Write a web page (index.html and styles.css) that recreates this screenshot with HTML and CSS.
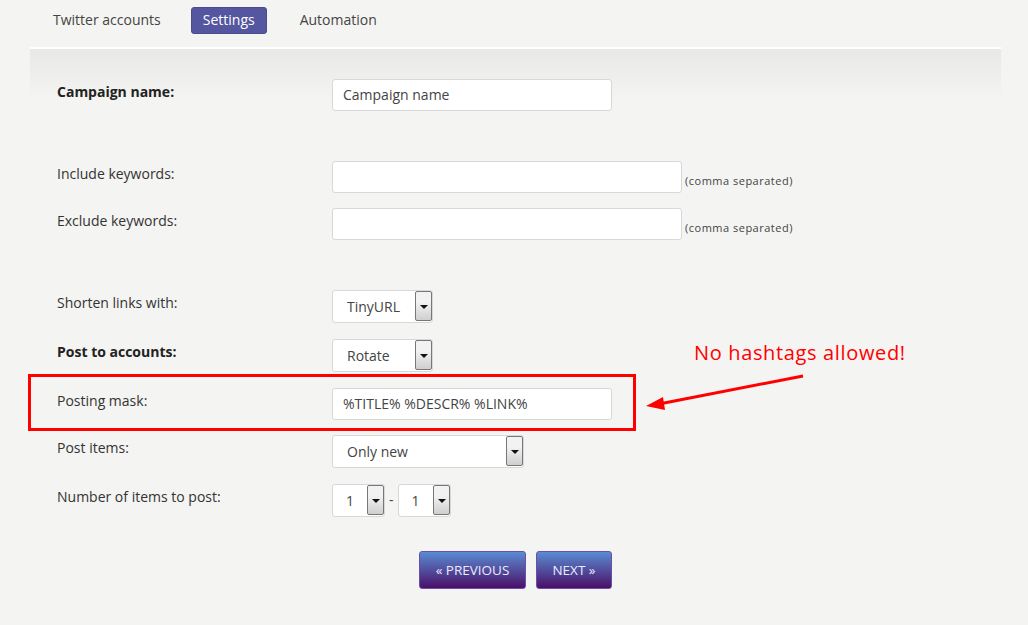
FILE: index.html
```html
<!DOCTYPE html>
<html lang="en">
  <head>
    <meta charset="UTF-8" />
    <title>Campaign settings</title>
    <link rel="stylesheet" href="styles.css">
  </head>
  <body>
    <div class="tabs">
      <div class="tab">Twitter accounts</div>
      <div class="tab active">Settings</div>
      <div class="tab">Automation</div>
    </div>

    <div class="panel">
      <div class="row first">
        <div class="label bold">Campaign name:</div>
        <div class="input w280">Campaign name</div>
      </div>

      <div class="row gap-big">
        <div class="label">Include keywords:</div>
        <div class="input w350"></div>
        <div class="hint">(comma separated)</div>
      </div>
      <div class="row tight">
        <div class="label">Exclude keywords:</div>
        <div class="input w350"></div>
        <div class="hint">(comma separated)</div>
      </div>

      <div class="row gap-big">
        <div class="label">Shorten links with:</div>
        <div class="select w101"><span class="val">TinyURL</span><span class="arrow"></span></div>
      </div>
      <div class="row">
        <div class="label bold">Post to accounts:</div>
        <div class="select w101"><span class="val">Rotate</span><span class="arrow"></span></div>
      </div>
      <div class="row">
        <div class="label">Posting mask:</div>
        <div class="input w280">%TITLE% %DESCR% %LINK%</div>
      </div>
      <div class="row tight">
        <div class="label">Post items:</div>
        <div class="select w192"><span class="val">Only new</span><span class="arrow"></span></div>
      </div>
      <div class="row">
        <div class="label">Number of items to post:</div>
        <div class="select w54"><span class="val">1</span><span class="arrow"></span></div>
        <div class="dash">-</div>
        <div class="select w54"><span class="val">1</span><span class="arrow"></span></div>
      </div>

      <div class="buttons">
        <div class="btn prev">&laquo; PREVIOUS</div>
        <div class="btn next">NEXT &raquo;</div>
      </div>
    </div>

    <!-- screenshot annotation -->
    <div class="mark-box"></div>
    <div class="mark-text">No hashtags allowed!</div>
    <svg class="mark-arrow" width="180" height="50" viewBox="0 0 180 50">
      <line x1="158" y1="6" x2="14" y2="34" stroke="#f00" stroke-width="3" />
      <polygon points="1,36 18,27 20,40" fill="#f00" />
    </svg>
  </body>
</html>
```

FILE: styles.css
```css
body {
  margin: 0;
  background-color: #f4f4f2;
  font-family: "Open Sans", "DejaVu Sans", sans-serif;
  font-size: 14px;
  color: #333;
  position: relative;
  height: 625px;
  overflow: hidden;
}

.tabs {
  display: flex;
  align-items: center;
  height: 40px;
  padding-left: 40px;
}
.tab {
  padding: 3px 13px 4px 13px;
  margin-right: 17px;
  color: #444;
  line-height: 18px;
}
.tab.active {
  padding: 3px 11px 4px 11px;
  background-color: #5556a0;
  color: #fff;
  border-radius: 3px;
  border: 1px solid #4a4b90;
  margin-right: 20px;
}

.panel {
  margin: 7px 27px 0 30px;
  border-top: 2px solid #fff;
  background: linear-gradient(#e8e8e6 0px, #f4f4f2 50px);
  padding: 30px 0 0 27px;
}

.row {
  display: flex;
  align-items: flex-start;
  margin-top: 16px;
}
.row.first {
  margin-top: 0;
}
.row.tight {
  margin-top: 15px;
}
.row.gap-big {
  margin-top: 50px;
}

.label {
  width: 275px;
  padding-top: 4px;
  line-height: 18px;
  color: #333;
}
.label.bold {
  font-weight: bold;
  color: #222;
}

.input {
  height: 30px;
  line-height: 30px;
  background: #fff;
  border: 1px solid #d8d8d8;
  border-radius: 3px;
  padding-left: 10px;
  color: #444;
  box-sizing: content-box;
}
.w280 { width: 268px; }
.w350 { width: 338px; }

.hint {
  font-size: 11px;
  letter-spacing: 0.5px;
  color: #444;
  margin: 12px 0 0 3px;
}

.select {
  display: flex;
  background: #fff;
  border: 1px solid #d8d8d8;
  border-radius: 3px;
  box-sizing: border-box;
  height: 33px;
}
.select .val {
  flex: 1;
  line-height: 31px;
  padding-left: 14px;
  color: #444;
}
.select .arrow {
  width: 15px;
  margin: 0 0 1px 0;
  border: 1px solid #777;
  border-radius: 2px;
  background: linear-gradient(#f2f2f2 0%, #f2f2f2 35%, #cfcfcf 100%);
  position: relative;
}
.select .arrow::after {
  content: "";
  position: absolute;
  left: 4px;
  top: 13px;
  border-left: 4px solid transparent;
  border-right: 4px solid transparent;
  border-top: 4px solid #111;
}
.w101 { width: 101px; }
.w192 { width: 192px; }
.w54 { width: 53px; }
.w54 .val { padding-left: 13px; }

.dash {
  padding: 6px 4px 0 4px;
  color: #444;
}

.buttons {
  display: flex;
  justify-content: center;
  gap: 10px;
  margin: 34px 27px 0 0;
}
.btn {
  height: 36px;
  line-height: 36px;
  font-size: 13.5px;
  color: #e8ecff;
  border: 1px solid #6c4fa8;
  border-radius: 3px;
  background: linear-gradient(#5a8cd2, #4a1068);
  text-align: center;
}
.btn.prev { width: 105px; }
.btn.next { width: 74px; }

.mark-box {
  position: absolute;
  left: 28px;
  top: 374px;
  width: 602px;
  height: 51px;
  border: 3px solid #f00;
}
.mark-text {
  position: absolute;
  left: 694px;
  top: 339px;
  font-size: 20px;
  color: #f00;
  line-height: 28px;
  letter-spacing: 0.65px;
}
.mark-arrow {
  position: absolute;
  left: 645px;
  top: 370px;
}
```
